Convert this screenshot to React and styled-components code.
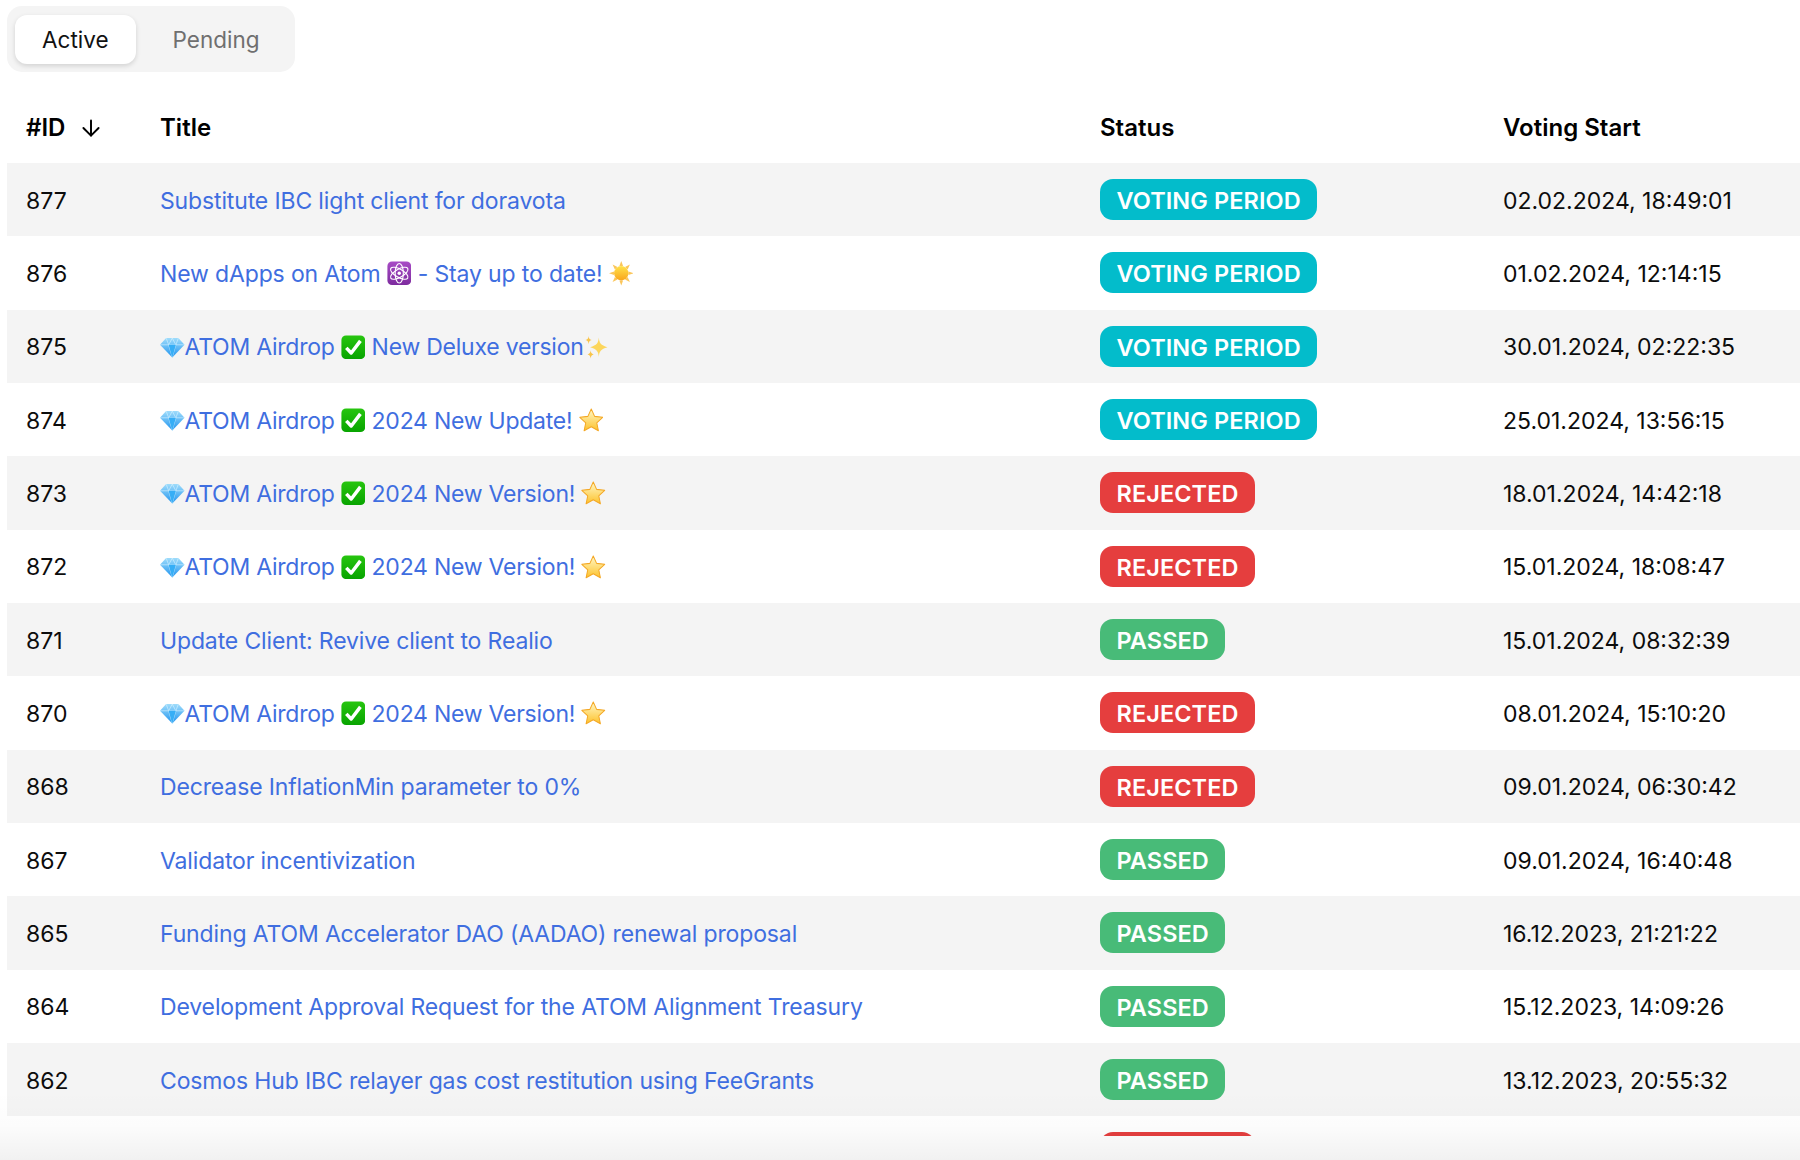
import React, { useState } from "react";
import styled, { createGlobalStyle } from "styled-components";
import { ArrowDown } from "lucide-react";

const GlobalStyle = createGlobalStyle`
  html, body {
    margin: 0;
    background: #fff;
    font-family: Inter, "Liberation Sans", sans-serif;
    color: #0c0c0c;
  }
`;

const Page = styled.div`
  position: relative;
  height: 1160px;
  overflow: hidden;
`;

const Content = styled.main`
  height: 1136px;
  padding: 6px 0 0 7px;
  box-sizing: border-box;
  overflow: hidden;
`;

const Tabs = styled.div`
  display: inline-flex;
  gap: 10px;
  padding: 9px 8px 8px;
  background: #f4f4f4;
  border-radius: 15px;
`;

const Tab = styled.button`
  height: 49px;
  padding: 0 27px;
  border: 0;
  border-radius: 12px;
  font: 400 22.5px Inter, sans-serif;
  cursor: pointer;
  background: ${(p) => (p.$active ? "#fff" : "transparent")};
  color: ${(p) => (p.$active ? "#111" : "#6f6f6f")};
  box-shadow: ${(p) => (p.$active ? "0 2px 5px rgba(0,0,0,.14)" : "none")};
`;

const Table = styled.div`
  margin-top: 20px;
`;

const Row = styled.div`
  display: grid;
  grid-template-columns: 134px 940px 403px 1fr;
  align-items: center;
  height: 73.33px;
  font-size: 23px;
  background: ${(p) => (p.$striped ? "#f4f4f4" : "#fff")};
`;

const HeadRow = styled(Row)`
  height: 71px;
  font-size: 24px;
  font-weight: 600;
  color: #000;
`;

const HeadCell = styled.div`
  padding-left: 19px;
  white-space: nowrap;
`;

const Cell = styled(HeadCell)`
  padding-top: 2px;
`;

const BadgeCell = styled(HeadCell)`
  display: flex;
`;

const IdHead = styled(HeadCell)`
  display: flex;
  align-items: center;
  gap: 13px;
`;

const TitleLink = styled.a`
  color: #3f6ee0;
  text-decoration: none;
  letter-spacing: ${(p) => (p.$tight ? "-0.24px" : "-0.14px")};
  cursor: pointer;
`;

const statusColors = {
  "VOTING PERIOD": "#03bccb",
  REJECTED: "#e53e3e",
  PASSED: "#48bb78",
};

const Badge = styled.span`
  display: inline-flex;
  align-items: center;
  box-sizing: border-box;
  height: 41px;
  padding: 2px 16.5px 0;
  border-radius: 13px;
  background: ${(p) => statusColors[p.$status]};
  color: #fff;
  font-weight: 600;
  font-size: 23.5px;
  letter-spacing: 0.08px;
`;

const Fade = styled.div`
  position: absolute;
  left: 0;
  right: 0;
  bottom: 0;
  height: 70px;
  pointer-events: none;
  background: linear-gradient(rgba(0, 0, 0, 0), rgba(0, 0, 0, 0.012) 50%, rgba(0, 0, 0, 0.055));
`;

const EmojiBox = styled.svg`
  display: inline-block;
  width: 24.5px;
  height: 24.5px;
  vertical-align: -4px;
`;

const Gem = () => (
  <EmojiBox viewBox="0 0 24 24">
    <defs>
      <linearGradient id="gemFill" x1="0" y1="0" x2="0" y2="1">
        <stop offset="0" stopColor="#9fdcfb" />
        <stop offset="1" stopColor="#1f94ef" />
      </linearGradient>
    </defs>
    <path d="M6 3h12l6 6.6L12 22 0 9.6z" fill="url(#gemFill)" />
    <path d="M0 9.6h24M6 3l2.5 6.6L12 22l3.5-12.4L18 3M8.5 9.6 12 3l3.5 6.6" fill="none" stroke="#d4f1ff" strokeOpacity=".7" strokeWidth=".9" />
    <path d="M8.5 9.6h7L12 22z" fill="#36aef6" />
  </EmojiBox>
);

const CheckMark = () => (
  <EmojiBox viewBox="0 0 24 24">
    <defs>
      <linearGradient id="checkFill" x1="0" y1="0" x2="0" y2="1">
        <stop offset="0" stopColor="#27c50f" />
        <stop offset="1" stopColor="#08a400" />
      </linearGradient>
    </defs>
    <rect x=".4" y=".4" width="23.2" height="23.2" rx="4.5" fill="url(#checkFill)" />
    <path d="M5.2 12.6 10 17.6 19 5.8" fill="none" stroke="#fff" strokeWidth="3.4" strokeLinejoin="round" />
  </EmojiBox>
);

const AtomSign = () => (
  <EmojiBox viewBox="0 0 24 24">
    <defs>
      <linearGradient id="atomFill" x1="0" y1="0" x2="0" y2="1">
        <stop offset="0" stopColor="#a84cc6" />
        <stop offset="1" stopColor="#7d2b9e" />
      </linearGradient>
    </defs>
    <rect x=".4" y=".4" width="23.2" height="23.2" rx="4.5" fill="url(#atomFill)" />
    <g fill="none" stroke="#fff" strokeWidth="1.1">
      <ellipse cx="12" cy="12" rx="4" ry="9.6" />
      <ellipse cx="12" cy="12" rx="4" ry="9.6" transform="rotate(60 12 12)" />
      <ellipse cx="12" cy="12" rx="4" ry="9.6" transform="rotate(120 12 12)" />
    </g>
    <circle cx="12" cy="12" r="1.7" fill="#fff" />
  </EmojiBox>
);

const Sun = () => (
  <EmojiBox viewBox="0 0 24 24">
    <defs>
      <linearGradient id="sunFill" x1="0" y1="0" x2="0" y2="1">
        <stop offset="0" stopColor="#ffe24a" />
        <stop offset="1" stopColor="#f9a51c" />
      </linearGradient>
    </defs>
    <g fill="#fbc65a">
      {[0, 45, 90, 135, 180, 225, 270, 315].map((a) => (
        <path key={a} d="M12 0 13.8 5h-3.600z" transform={`rotate(${a} 12 12)`} />
      ))}
    </g>
    <circle cx="12" cy="12" r="7" fill="url(#sunFill)" />
  </EmojiBox>
);

const Sparkles = () => (
  <EmojiBox viewBox="0 0 24 24">
    <path d="M14.500 2.500c.5 5.500 1.800 7.500 8.500 9.500-6.700 2-8 4-8.500 9.500-.5-5.500-1.800-7.500-8.500-9.500 6.700-2 8-4 8.500-9.500z" fill="#fcd65c" />
    <path d="M4.500 1c.3 2.600.9 3.400 3 4-2.100.6-2.700 1.400-3 4-.3-2.600-.9-3.400-3-4 2.100-.6 2.700-1.400 3-4z" fill="#f8c44a" />
    <path d="M6.500 15c.3 2.600.9 3.400 3 4-2.100.6-2.700 1.400-3 4-.3-2.600-.9-3.400-3-4 2.100-.6 2.700-1.400 3-4z" fill="#f8c44a" />
  </EmojiBox>
);

const Star = () => (
  <EmojiBox viewBox="0 0 24 24">
    <defs>
      <linearGradient id="starFill" x1="0" y1="0" x2="0" y2="1">
        <stop offset="0" stopColor="#fff8c8" />
        <stop offset="1" stopColor="#fdc22b" />
      </linearGradient>
    </defs>
    <path d="M12 1l3.300 7.200 7.900.9-5.800 5.400 1.600 7.800L12 18.400l-7 3.900 1.600-7.800-5.800-5.400 7.900-.9z" fill="url(#starFill)" stroke="#f4a825" strokeWidth="1" strokeLinejoin="round" />
  </EmojiBox>
);

const airdrop = (text) => (
  <>
    <Gem />
    ATOM Airdrop <CheckMark /> {text} <Star />
  </>
);

const proposals = [
  { id: 877, title: "Substitute IBC light client for doravota", status: "VOTING PERIOD", start: "02.02.2024, 18:49:01" },
  {
    id: 876,
    title: (
      <>
        New dApps on Atom <AtomSign /> - Stay up to date! <Sun />
      </>
    ),
    status: "VOTING PERIOD",
    start: "01.02.2024, 12:14:15",
  },
  {
    id: 875,
    tight: true,
    title: (
      <>
        <Gem />
        ATOM Airdrop <CheckMark /> New Deluxe version
        <Sparkles />
      </>
    ),
    status: "VOTING PERIOD",
    start: "30.01.2024, 02:22:35",
  },
  { id: 874, tight: true, title: airdrop("2024 New Update!"), status: "VOTING PERIOD", start: "25.01.2024, 13:56:15" },
  { id: 873, tight: true, title: airdrop("2024 New Version!"), status: "REJECTED", start: "18.01.2024, 14:42:18" },
  { id: 872, tight: true, title: airdrop("2024 New Version!"), status: "REJECTED", start: "15.01.2024, 18:08:47" },
  { id: 871, title: "Update Client: Revive client to Realio", status: "PASSED", start: "15.01.2024, 08:32:39" },
  { id: 870, tight: true, title: airdrop("2024 New Version!"), status: "REJECTED", start: "08.01.2024, 15:10:20" },
  { id: 868, title: "Decrease InflationMin parameter to 0%", status: "REJECTED", start: "09.01.2024, 06:30:42" },
  { id: 867, title: "Validator incentivization", status: "PASSED", start: "09.01.2024, 16:40:48" },
  { id: 865, title: "Funding ATOM Accelerator DAO (AADAO) renewal proposal", status: "PASSED", start: "16.12.2023, 21:21:22" },
  { id: 864, title: "Development Approval Request for the ATOM Alignment Treasury", status: "PASSED", start: "15.12.2023, 14:09:26" },
  { id: 862, title: "Cosmos Hub IBC relayer gas cost restitution using FeeGrants", status: "PASSED", start: "13.12.2023, 20:55:32" },
  { id: null, title: null, status: "REJECTED", start: null },
];

export default function App() {
  const [tab, setTab] = useState("Active");

  return (
    <Page>
      <GlobalStyle />
      <Content>
        <Tabs>
          {["Active", "Pending"].map((name) => (
            <Tab key={name} $active={tab === name} onClick={() => setTab(name)}>
              {name}
            </Tab>
          ))}
        </Tabs>
        <Table>
          <HeadRow>
            <IdHead>
              #ID <ArrowDown size={26} strokeWidth={1.8} />
            </IdHead>
            <HeadCell>Title</HeadCell>
            <HeadCell>Status</HeadCell>
            <HeadCell>Voting Start</HeadCell>
          </HeadRow>
          {proposals.map((p, i) => (
            <Row key={i} $striped={i % 2 === 0}>
              <Cell>{p.id}</Cell>
              <Cell>
                <TitleLink $tight={p.tight}>{p.title}</TitleLink>
              </Cell>
              <BadgeCell>
                <Badge $status={p.status}>{p.status}</Badge>
              </BadgeCell>
              <Cell>{p.start}</Cell>
            </Row>
          ))}
        </Table>
      </Content>
      <Fade />
    </Page>
  );
}
